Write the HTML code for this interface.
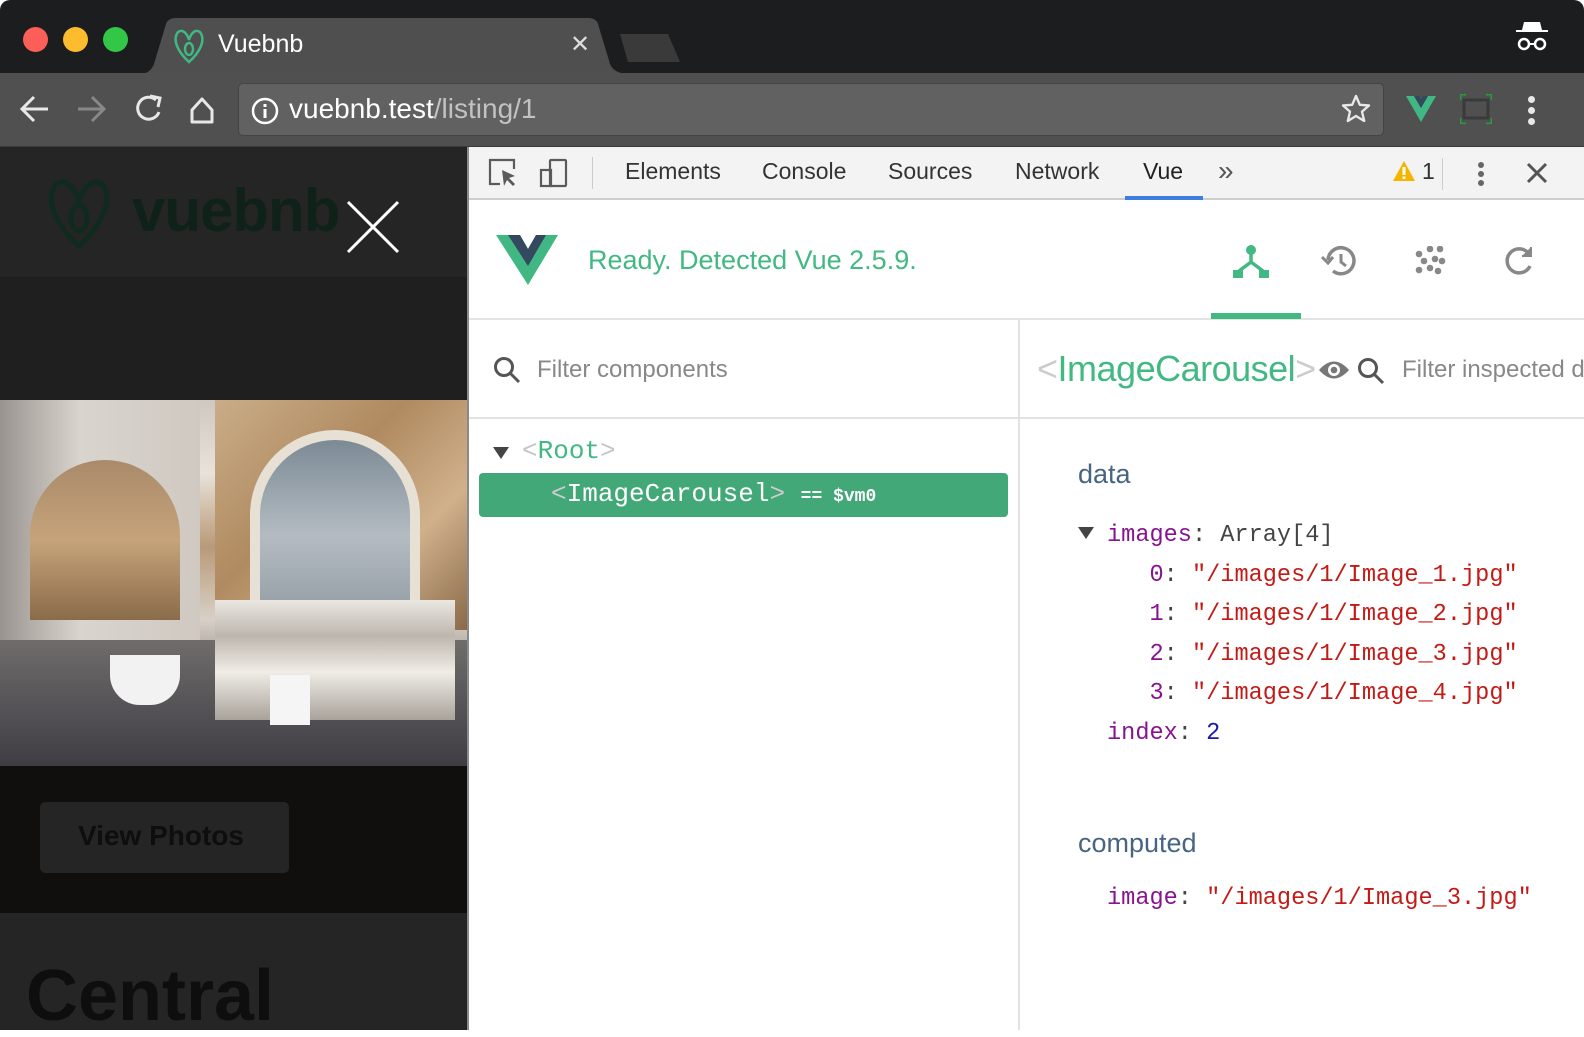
<!DOCTYPE html>
<html><head><meta charset="utf-8"><style>
*{margin:0;padding:0;box-sizing:border-box}
body{width:1584px;height:1030px;overflow:hidden;background:#fff;font-family:"Liberation Sans",sans-serif;position:relative}
.a{position:absolute}
.mono{font-family:"Liberation Mono",monospace}
</style></head><body>
<!-- tab strip -->
<div class="a" style="left:0;top:0;width:1584px;height:74px;background:#1c1d1f;border-radius:10px 10px 0 0"></div>
<div class="a" style="left:23px;top:27px;width:25px;height:25px;border-radius:50%;background:#fc5f57"></div>
<div class="a" style="left:63px;top:27px;width:25px;height:25px;border-radius:50%;background:#fdbc2e"></div>
<div class="a" style="left:103px;top:27px;width:25px;height:25px;border-radius:50%;background:#33c748"></div>
<svg class="a" style="left:140px;top:16px" width="490" height="58"><path d="M0 58 Q10 58 14 48 L26 8 Q28 2 36 2 L448 2 Q456 2 458 8 L470 48 Q474 58 490 58Z" fill="#4f4f4f"/></svg>
<svg class="a" style="left:616px;top:32px" width="66" height="32"><path d="M4 2 L52 2 L64 30 L12 30Z" fill="#3a3a3a"/></svg>
<svg class="a" style="left:172px;top:28px" width="34" height="36"><path d="M6 4 C0 12 6 24 17 34 C28 24 34 12 28 4 C22 0 18 8 17 12 C16 8 12 0 6 4Z" fill="none" stroke="#41b883" stroke-width="2.5"/><ellipse cx="17" cy="21" rx="4" ry="6" fill="none" stroke="#41b883" stroke-width="2.5"/></svg>
<div class="a" style="left:218px;top:30px;color:#fff;font-size:25px">Vuebnb</div>
<div class="a" style="left:570px;top:30px;color:#ddd;font-size:24px">✕</div>
<svg class="a" style="left:1514px;top:20px" width="36" height="32"><path d="M10 2 H26 L28 10 H34 V12 H2 V10 H8Z" fill="#fff"/><circle cx="10" cy="24" r="5" fill="none" stroke="#fff" stroke-width="2.5"/><circle cx="26" cy="24" r="5" fill="none" stroke="#fff" stroke-width="2.5"/><path d="M15 24 H21" stroke="#fff" stroke-width="2"/></svg>
<!-- toolbar -->
<div class="a" style="left:0;top:73px;width:1584px;height:74px;background:#505050;border-bottom:1px solid #3a3a3a"></div>
<svg class="a" style="left:18px;top:92px" width="220" height="34" fill="none" stroke-width="3">
<path d="M30 17 H5 M16 5 L4 17 L16 29" stroke="#e8e8e8"/>
<path d="M60 17 H85 M74 5 L86 17 L74 29" stroke="#888"/>
<path d="M138 8 A11 11 0 1 0 141 20" stroke="#e8e8e8"/><path d="M132 4 L142 6 L140 15" stroke="#e8e8e8"/>
<path d="M174 18 L184 7 L194 18 V30 H174Z" stroke="#e8e8e8" stroke-linejoin="round"/>
</svg>
<div class="a" style="left:238px;top:83px;width:1146px;height:53px;background:#616161;border-radius:5px;border:1px solid #444"></div>
<svg class="a" style="left:250px;top:96px" width="30" height="30"><circle cx="15" cy="15" r="12" fill="none" stroke="#fff" stroke-width="2.5"/><rect x="13.5" y="13" width="3" height="9" fill="#fff"/><rect x="13.5" y="8" width="3" height="3" fill="#fff"/></svg>
<div class="a" style="left:289px;top:93px;font-size:28px;color:#fff">vuebnb.test<span style="color:#c2c2c2">/listing/1</span></div>
<svg class="a" style="left:1340px;top:93px" width="32" height="32"><path d="M16 3 L19.8 11.8 L29 12.5 L22 18.6 L24.2 28 L16 23 L7.8 28 L10 18.6 L3 12.5 L12.2 11.8Z" fill="none" stroke="#e8e8e8" stroke-width="2.4" stroke-linejoin="round"/></svg>
<svg class="a" style="left:1404px;top:94px" width="34" height="30"><path d="M2 2 H10 L17 14 L24 2 H32 L17 28Z" fill="#41b883"/><path d="M10 2 H15 L17 6 L19 2 H24 L17 14Z" fill="#35495e"/></svg>
<svg class="a" style="left:1460px;top:94px" width="32" height="30"><rect x="4" y="6" width="24" height="18" fill="none" stroke="#3a3a3a" stroke-width="3"/><path d="M0 6 V0 H6 M26 0 H32 V6 M0 24 V30 H6 M26 30 H32 V24" stroke="#2a9a3a" stroke-width="3" fill="none"/></svg>
<div class="a" style="left:1528px;top:96px;width:7px;height:7px;border-radius:50%;background:#e8e8e8;box-shadow:0 11px 0 #e8e8e8,0 22px 0 #e8e8e8"></div>
<!-- left page -->
<div class="a" style="left:0;top:147px;width:468px;height:883px;background:#242424"></div>
<div class="a" style="left:0;top:147px;width:468px;height:130px;background:#252525"></div>
<div class="a" style="left:0;top:277px;width:468px;height:123px;background:#1f1f1f"></div>
<svg class="a" style="left:44px;top:178px" width="70" height="72"><path d="M12 6 C0 20 12 48 35 68 C58 48 70 20 58 6 C46 -2 38 14 35 22 C32 14 24 -2 12 6Z" fill="none" stroke="#0f2a1f" stroke-width="5"/><ellipse cx="35" cy="40" rx="8" ry="13" fill="none" stroke="#0f2a1f" stroke-width="5"/></svg>
<div class="a" style="left:132px;top:176px;font-size:60px;font-weight:bold;color:#0f2219;letter-spacing:-1px">vuebnb</div>
<svg class="a" style="left:346px;top:200px" width="54" height="54"><path d="M2 2 L52 52 M52 2 L2 52" stroke="#fff" stroke-width="3"/></svg>
<!-- photo approximation -->
<div class="a" style="left:0;top:400px;width:467px;height:366px;overflow:hidden;background:linear-gradient(180deg,#cfc8c0 0%,#e8e2da 20%,#b99a78 40%,#d8d0c6 60%,#7b7774 80%,#4a4a55 100%)">
 <div class="a" style="left:0;top:0;width:200px;height:366px;background:linear-gradient(90deg,#9a9490,#d9d4ce 40%,#cfc9c1)"></div>
 <div class="a" style="left:30px;top:60px;width:150px;height:160px;border-radius:75px 75px 0 0;background:linear-gradient(180deg,#a98a6a,#c6a37a 50%,#8a6c4a)"></div>
 <div class="a" style="left:215px;top:0;width:252px;height:230px;background:linear-gradient(135deg,#c9ad88,#b08a60 40%,#d0b18c 70%,#8a6a48)"></div>
 <div class="a" style="left:250px;top:30px;width:170px;height:180px;border-radius:85px 85px 4px 4px;border:10px solid #e6e0d5;background:linear-gradient(180deg,#7c8a95,#b4bcc2 60%,#9aa3aa)"></div>
 <div class="a" style="left:0;top:240px;width:467px;height:126px;background:linear-gradient(180deg,#6f6c6b,#3f3d44)"></div>
 <div class="a" style="left:215px;top:200px;width:240px;height:120px;background:linear-gradient(180deg,#ebe7e2,#bdb6ad 30%,#f0ece6 60%,#a8a29a)"></div>
 <div class="a" style="left:110px;top:255px;width:70px;height:50px;border-radius:0 0 30px 30px;background:#f2f2f2"></div>
 <div class="a" style="left:270px;top:275px;width:40px;height:50px;background:#f5f5f5"></div>
</div>
<div class="a" style="left:0;top:766px;width:468px;height:147px;background:#110e0e"></div>
<div class="a" style="left:40px;top:802px;width:249px;height:71px;background:#252525;border-radius:5px"></div>
<div class="a" style="left:78px;top:820px;font-size:28px;font-weight:bold;color:#0e0e0e">View Photos</div>
<div class="a" style="left:0;top:913px;width:468px;height:117px;background:#252525"></div>
<div class="a" style="left:26px;top:955px;font-size:72px;font-weight:bold;color:#0e0e0e">Central</div>
<!-- devtools -->
<div class="a" style="left:467px;top:147px;width:2px;height:883px;background:#8a8a8a"></div>
<div class="a" style="left:469px;top:147px;width:1115px;height:53px;background:#f3f3f3;border-bottom:2px solid #cdcdcd"></div>
<svg class="a" style="left:486px;top:156px" width="90" height="34" fill="none" stroke="#5a5a5a" stroke-width="2.2">
<path d="M14 28 H4 V4 H28 V13"/><path d="M16 14 L18 30 L21 24 L27 30 L29 28 L23 22 L29 20Z" fill="#5a5a5a" stroke="none"/>
<rect x="64" y="4" width="16" height="26" rx="1"/><rect x="55" y="14" width="10" height="16"/>
</svg>
<div class="a" style="left:592px;top:157px;width:1px;height:32px;background:#ccc"></div>
<div class="a" style="left:625px;top:158px;font-size:23px;color:#333;word-spacing:0">Elements</div>
<div class="a" style="left:762px;top:158px;font-size:23px;color:#333">Console</div>
<div class="a" style="left:888px;top:158px;font-size:23px;color:#333">Sources</div>
<div class="a" style="left:1015px;top:158px;font-size:23px;color:#333">Network</div>
<div class="a" style="left:1143px;top:158px;font-size:23px;color:#222">Vue</div>
<div class="a" style="left:1125px;top:196px;width:78px;height:4px;background:#3d7ee0"></div>
<div class="a" style="left:1218px;top:155px;font-size:28px;color:#555">»</div>
<svg class="a" style="left:1392px;top:160px" width="24" height="22"><path d="M12 1 L23 21 H1Z" fill="#f4b400"/><rect x="10.5" y="7" width="3" height="8" fill="#fff"/><rect x="10.5" y="16.5" width="3" height="2.5" fill="#fff"/></svg>
<div class="a" style="left:1422px;top:158px;font-size:23px;color:#333">1</div>
<div class="a" style="left:1442px;top:158px;width:1px;height:32px;background:#ccc"></div>
<div class="a" style="left:1478px;top:162px;width:6px;height:6px;border-radius:50%;background:#666;box-shadow:0 9px 0 #666,0 18px 0 #666"></div>
<svg class="a" style="left:1526px;top:162px" width="22" height="22"><path d="M2 2 L20 20 M20 2 L2 20" stroke="#555" stroke-width="3"/></svg>
<!-- vue header -->
<div class="a" style="left:469px;top:200px;width:1115px;height:120px;background:#fff;border-bottom:2px solid #e4e4e4"></div>
<svg class="a" style="left:496px;top:233px" width="64" height="54"><path d="M0 2 H24 L32 16 L40 2 H62 L32 52Z" fill="#41b883"/><path d="M12 2 H24 L32 16 L40 2 H50 L32 33Z" fill="#35495e"/></svg>
<div class="a" style="left:588px;top:245px;font-size:27px;color:#42b983">Ready. Detected Vue 2.5.9.</div>
<svg class="a" style="left:1230px;top:244px" width="42" height="34"><circle cx="21" cy="6" r="5" fill="#42b983"/><path d="M21 8 V18 L9 27 M21 18 L33 27" stroke="#42b983" stroke-width="3.5" fill="none"/><rect x="3" y="26" width="10" height="8" fill="#42b983"/><rect x="29" y="26" width="10" height="8" fill="#42b983"/></svg>
<div class="a" style="left:1211px;top:313px;width:90px;height:6px;background:#42b983"></div>
<svg class="a" style="left:1320px;top:244px" width="40" height="34" fill="none" stroke="#888" stroke-width="3.5"><path d="M8 16 A13 13 0 1 1 13 27"/><path d="M2 13 L8 19 L13 13" stroke-width="3"/><path d="M21 10 V18 L26 22" stroke-width="3"/></svg>
<svg class="a" style="left:1414px;top:246px" width="32" height="30" fill="#888"><circle cx="5" cy="8" r="3.3"/><circle cx="16" cy="3" r="3.3"/><circle cx="26" cy="3" r="3.3"/><circle cx="10" cy="15" r="3.3"/><circle cx="21" cy="13" r="3.3"/><circle cx="28" cy="15" r="3.3"/><circle cx="5" cy="24" r="3.3"/><circle cx="16" cy="22" r="3.3"/><circle cx="24" cy="25" r="3.3"/></svg>
<svg class="a" style="left:1502px;top:244px" width="34" height="34" fill="none" stroke="#888" stroke-width="3.5"><path d="M27 10 A12 12 0 1 0 28 22"/><path d="M29 3 V12 H20" fill="#888" stroke-width="2"/></svg>
<!-- panels -->
<div class="a" style="left:1018px;top:320px;width:2px;height:710px;background:#e2e2e2"></div>
<div class="a" style="left:469px;top:417px;width:1115px;height:2px;background:#e2e2e2"></div>
<svg class="a" style="left:492px;top:355px" width="30" height="30" fill="none" stroke="#555" stroke-width="3"><circle cx="12" cy="12" r="8.5"/><path d="M18 18 L27 27"/></svg>
<div class="a" style="left:537px;top:356px;font-size:24px;color:#888">Filter components</div>
<svg class="a" style="left:492px;top:445px" width="18" height="16"><path d="M1 2 H17 L9 14Z" fill="#444"/></svg>
<div class="a mono" style="left:522px;top:436px;font-size:26px;color:#42b983"><span style="color:#c4c4c4">&lt;</span>Root<span style="color:#c4c4c4">&gt;</span></div>
<div class="a" style="left:479px;top:473px;width:529px;height:44px;background:#42a877;border-radius:4px"></div>
<div class="a mono" style="left:551px;top:479px;font-size:26px;color:#fff;white-space:pre"><span style="color:#ccc">&lt;</span>ImageCarousel<span style="color:#ccc">&gt;</span> <span style="font-size:18px;font-weight:bold">== $vm0</span></div>
<div class="a" style="left:1037px;top:348px;font-size:36px;color:#42b983;letter-spacing:-0.5px"><span style="color:#ccc">&lt;</span>ImageCarousel<span style="color:#ccc">&gt;</span></div>
<svg class="a" style="left:1318px;top:359px" width="32" height="22"><path d="M1 11 Q16 -6 31 11 Q16 28 1 11Z" fill="#777"/><circle cx="16" cy="11" r="6" fill="#fff"/><circle cx="16" cy="11" r="3.3" fill="#777"/></svg>
<svg class="a" style="left:1356px;top:356px" width="30" height="30" fill="none" stroke="#555" stroke-width="3"><circle cx="12" cy="12" r="8.5"/><path d="M18 18 L27 27"/></svg>
<div class="a" style="left:1402px;top:356px;font-size:24px;color:#888;white-space:nowrap">Filter inspected data</div>
<div class="a" style="left:1078px;top:459px;font-size:27px;color:#476582">data</div>
<svg class="a" style="left:1077px;top:525px" width="18" height="16"><path d="M1 2 H17 L9 14Z" fill="#444"/></svg>
<div class="a mono" style="left:1107px;top:516px;font-size:23.6px;line-height:39.6px;white-space:pre;color:#444"><span style="color:#881391">images</span>: Array[4]
   <span style="color:#881391">0</span>: <span style="color:#c41a16">"/images/1/Image_1.jpg"</span>
   <span style="color:#881391">1</span>: <span style="color:#c41a16">"/images/1/Image_2.jpg"</span>
   <span style="color:#881391">2</span>: <span style="color:#c41a16">"/images/1/Image_3.jpg"</span>
   <span style="color:#881391">3</span>: <span style="color:#c41a16">"/images/1/Image_4.jpg"</span>
<span style="color:#881391">index</span>: <span style="color:#1a1aa6">2</span></div>
<div class="a" style="left:1078px;top:828px;font-size:27px;color:#476582">computed</div>
<div class="a mono" style="left:1107px;top:885px;font-size:23.6px;white-space:pre;color:#444"><span style="color:#881391">image</span>: <span style="color:#c41a16">"/images/1/Image_3.jpg"</span></div>
</body></html>
